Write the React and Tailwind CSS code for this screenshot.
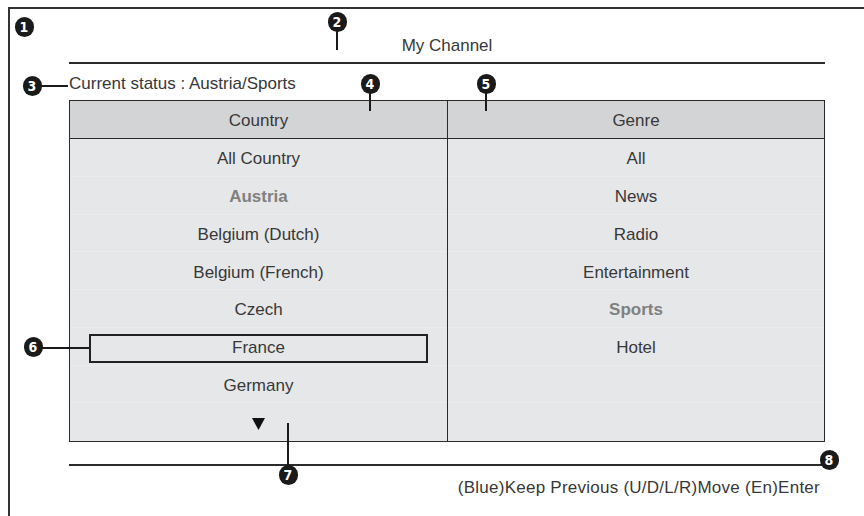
import React from "react";

const countries = [
  { t: "All Country" },
  { t: "Austria", hl: true },
  { t: "Belgium (Dutch)" },
  { t: "Belgium (French)" },
  { t: "Czech" },
  { t: "France", focus: true },
  { t: "Germany" },
];
const genres = [
  { t: "All" },
  { t: "News" },
  { t: "Radio" },
  { t: "Entertainment" },
  { t: "Sports", hl: true },
  { t: "Hotel" },
  { t: "" },
];

function Callout({ n, x, y }) {
  return (
    <div
      className="absolute w-[19px] h-[20px] rounded-full bg-[#1a1a1a] text-white flex items-center justify-center text-[14px] font-bold leading-none"
      style={{ left: x - 9.5, top: y - 10, fontFamily: '"DejaVu Sans Condensed", "Liberation Sans", sans-serif' }}
    >
      {n}
    </div>
  );
}

function Row({ item, last }) {
  return (
    <div className={"h-[37.75px] pt-[4px] flex items-center justify-center " + (last ? "" : "border-b border-[#ebecee]")}>
      {item.focus ? (
        <div className="mx-[19px] w-[339px] h-[29px] border-2 border-[#222] flex items-center justify-center">{item.t}</div>
      ) : (
        <span className={item.hl ? "font-bold text-[#808080]" : ""}>{item.t}</span>
      )}
    </div>
  );
}

export default function App() {
  return (
    <div
      className="relative w-[864px] h-[516px] bg-white overflow-hidden text-[17px] leading-[20px] text-[#383838]"
      style={{ fontFamily: '"Liberation Sans", Arial, sans-serif' }}
    >
      <div className="ml-[8px] mt-[7px] h-[509px] border-l-2 border-t-2 border-[#333] pl-[59px] pr-[39px]">
        <div className="h-[53px] pt-[27px] text-center">My Channel</div>
        <div className="h-[2px] bg-[#2a2a2a]" />
        <div className="mt-[10px] h-[20px]">Current status : Austria/Sports</div>
        <div className="mt-[6px] border border-[#2a2a2a] flex">
          <div className="flex-1 border-r border-[#2a2a2a]">
            <div className="h-[38px] pt-[2px] bg-[#d3d4d6] border-b border-[#2a2a2a] flex items-center justify-center">Country</div>
            <div className="bg-[#e6e7e9]">
              {countries.map((c, i) => (
                <Row key={i} item={c} />
              ))}
              <div className="h-[37.75px] pt-[4px] flex items-center justify-center">
                <svg width="13" height="12" viewBox="0 0 13 12">
                  <polygon points="0,0 13,0 6.5,12" fill="#111" />
                </svg>
              </div>
            </div>
          </div>
          <div className="flex-1">
            <div className="h-[38px] pt-[2px] bg-[#d3d4d6] border-b border-[#2a2a2a] flex items-center justify-center">Genre</div>
            <div className="bg-[#e6e7e9]">
              {genres.map((c, i) => (
                <Row key={i} item={c} />
              ))}
              <div className="h-[37.75px]" />
            </div>
          </div>
        </div>
        <div className="mt-[22px] h-[2px] bg-[#2a2a2a]" />
        <div className="mt-[12px] h-[20px] text-right pr-[5px] tracking-[0.25px]">(Blue)Keep Previous (U/D/L/R)Move (En)Enter</div>
      </div>

      {/* callout leader lines */}
      <div className="absolute left-[336px] top-[31px] w-[2px] h-[19px] bg-[#1a1a1a]" />
      <div className="absolute left-[41px] top-[85px] w-[27px] h-[2px] bg-[#1a1a1a]" />
      <div className="absolute left-[369px] top-[93px] w-[2px] h-[18px] bg-[#1a1a1a]" />
      <div className="absolute left-[485px] top-[93px] w-[2px] h-[18px] bg-[#1a1a1a]" />
      <div className="absolute left-[42px] top-[347px] w-[47px] h-[2px] bg-[#1a1a1a]" />
      <div className="absolute left-[287px] top-[423px] w-[2px] h-[43px] bg-[#1a1a1a]" />

      <Callout n="1" x={24} y={27} />
      <Callout n="2" x={337} y={22} />
      <Callout n="3" x={32} y={86} />
      <Callout n="4" x={370} y={84} />
      <Callout n="5" x={486} y={84} />
      <Callout n="6" x={33} y={347} />
      <Callout n="7" x={288} y={475} />
      <Callout n="8" x={829} y={460} />
    </div>
  );
}
